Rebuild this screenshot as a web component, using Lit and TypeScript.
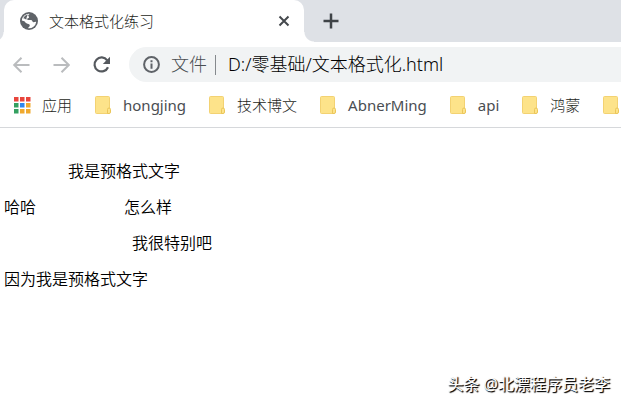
import { LitElement, html, css, svg } from "lit";
import { customElement, property } from "lit/decorators.js";
import { classMap } from "lit/directives/class-map.js";

const BOOKMARKS = ["hongjing", "技术博文", "AbnerMing", "api", "鸿蒙", ""];

const APP_COLORS = [
  "#e8453c", "#e8453c", "#e8453c",
  "#34a060", "#2f86ee", "#f0a92e",
  "#34a060", "#f0a92e", "#f0a92e",
];

const LINES = [
  "\t".repeat(8) + "我是预格式文字",
  "哈哈" + "\t".repeat(11) + "怎么样",
  "\t".repeat(16) + "我很特别吧",
  "因为我是预格式文字",
];

@customElement("tab-strip")
class TabStrip extends LitElement {
  static styles = css`
    :host {
      display: flex;
      height: 42px;
      background: #dee1e6;
      padding-left: 4px;
      overflow: hidden;
    }
    .tab {
      position: relative;
      display: flex;
      align-items: center;
      flex: 0 0 300px;
      box-sizing: border-box;
      padding: 0 12px 0 16px;
      background: #fff;
      border-radius: 10px 10px 0 0;
    }
    .tab::before,
    .tab::after {
      content: "";
      position: absolute;
      bottom: 0;
      width: 10px;
      height: 10px;
    }
    .tab::before {
      right: 100%;
      background: radial-gradient(circle at 0 0, transparent 9px, #fff 10px);
    }
    .tab::after {
      left: 100%;
      background: radial-gradient(circle at 100% 0, transparent 9px, #fff 10px);
    }
    .title {
      flex: 1;
      margin-left: 11px;
      font-size: 15px;
      line-height: 20px;
      font-weight: 300;
      color: #1c1e21;
    }
    button {
      display: flex;
      align-items: center;
      justify-content: center;
      width: 16px;
      padding: 0;
      border: 0;
      background: none;
    }
    .new {
      margin-left: 19px;
    }
    svg {
      display: block;
      flex: none;
    }
  `;

  render() {
    return html`
      <div class="tab">
        <svg width="18" height="18" viewBox="0 0 18 18" aria-hidden="true">
          <circle cx="9" cy="9" r="9" fill="#5f6368" />
          <path d="M9.8 1.9C8.2 2.600 7.800 3.600 8.800 4.500C9.500 5.200 8.900 6.100 8 6.200C6.900 6.400 7 7.700 8 7.900L11.200 8.100C12.700 8.400 12.200 10.300 13.600 10.300C14.700 10.300 15.300 9.700 16.200 9.900A7.300 7.300 0 0 1 8.100 16.200C8.200 15 9.800 14.900 9.800 13.500C9.800 12.200 8.700 11.900 7.500 11.800C5.900 11.600 5.300 10 4.400 9.300L1.800 8.600A7.200 7.200 0 0 1 9.800 1.900Z" fill="#fff" />
          <path d="M3.200 6.200C4.600 6.200 5.200 7.300 6.400 7.600L6.600 5.400L7.800 2.400A7 7 0 0 0 3.200 6.200Z" fill="#5f6368" />
        </svg>
        <span class="title">文本格式化练习</span>
        <button aria-label="关闭">
          <svg width="12" height="12" viewBox="0 0 12 12"><path d="M1.5 1.5L10.5 10.5M10.5 1.5L1.5 10.5" stroke="#45494d" stroke-width="2" /></svg>
        </button>
      </div>
      <button class="new" aria-label="新标签页">
        <svg width="16" height="16" viewBox="0 0 16 16"><path d="M8 0.5V15.5M0.5 8H15.5" stroke="#3f4347" stroke-width="2.500" /></svg>
      </button>
    `;
  }
}

@customElement("nav-bar")
class NavBar extends LitElement {
  static styles = css`
    :host {
      display: flex;
      align-items: center;
      height: 45px;
      padding-left: 12px;
      background: #fff;
    }
    button {
      display: flex;
      align-items: center;
      flex: none;
      padding: 0;
      border: 0;
      background: none;
      font: inherit;
      color: #5f6368;
    }
    .nav {
      width: 40px;
    }
    .omnibox {
      display: flex;
      align-items: center;
      flex: 1;
      min-width: 0;
      height: 35px;
      margin-left: -3px;
      padding-left: 14px;
      background: #f1f3f4;
      border-radius: 18px 0 0 18px;
      font-size: 18px;
      line-height: 24px;
      font-weight: 300;
    }
    .info {
      gap: 11px;
      color: #4a4e52;
    }
    .rule {
      flex: none;
      width: 1px;
      height: 20px;
      margin: 0 12px 0 8px;
      background: #85898d;
    }
    .info span,
    input {
      padding: 0 0 2px;
    }
    input {
      flex: 1;
      min-width: 0;
      border: 0;
      outline: 0;
      background: none;
      font: inherit;
      color: #000;
    }
    svg {
      display: block;
      flex: none;
    }
  `;

  render() {
    return html`
      <button class="nav" aria-label="后退">
        <svg width="18" height="18" viewBox="0 0 18 18"><path d="M17.500 9H2.500M9.500 1.700L2.200 9L9.500 16.300" fill="none" stroke="#babcbe" stroke-width="2" /></svg>
      </button>
      <button class="nav" aria-label="前进">
        <svg width="18" height="18" viewBox="0 0 18 18"><path d="M1.500 9H16.500M9.500 1.700L16.800 9L9.500 16.300" fill="none" stroke="#babcbe" stroke-width="2" /></svg>
      </button>
      <button class="nav" aria-label="重新加载">
        <svg width="20" height="18" viewBox="0 0 20 18">
          <path d="M15.200 4.300A7 7 0 1 0 16 11.200" fill="none" stroke="#55595e" stroke-width="2.200" />
          <path d="M18 0.800V8H10.800Z" fill="#55595e" />
        </svg>
      </button>
      <div class="omnibox">
        <button class="info">
          <svg width="17" height="17" viewBox="0 0 17 17" aria-hidden="true">
            <circle cx="8.500" cy="8.500" r="7.400" fill="none" stroke="#5f6368" stroke-width="2" />
            <path d="M8.500 7.500V12.700M8.500 4.300V6.200" stroke="#5f6368" stroke-width="2" />
          </svg>
          <span>文件</span>
        </button>
        <span class="rule"></span>
        <input aria-label="地址" value="D:/零基础/文本格式化.html" />
      </div>
    `;
  }
}

@customElement("bookmark-bar")
class BookmarkBar extends LitElement {
  @property({ attribute: false }) items: string[] = BOOKMARKS;

  static styles = css`
    :host {
      display: flex;
      align-items: center;
      gap: 23px;
      box-sizing: border-box;
      height: 41px;
      padding: 0 0 4px 14px;
      background: #fff;
      border-bottom: 1px solid #d6d8db;
      overflow: hidden;
      font-size: 15px;
    }
    button {
      display: flex;
      align-items: center;
      flex: none;
      gap: 12px;
      height: 24px;
      padding: 0;
      border: 0;
      background: none;
      font: inherit;
      line-height: 24px;
      color: #4a4e52;
      white-space: nowrap;
    }
    .han {
      font-weight: 300;
      color: #1c1e21;
    }
    svg {
      display: block;
      flex: none;
      overflow: visible;
    }
  `;

  render() {
    return html`
      <button class="han">
        <svg width="16" height="16" viewBox="0 0 16 16" aria-hidden="true">
          ${APP_COLORS.map((c, i) => svg`<rect x=${(i % 3) * 6} y=${Math.floor(i / 3) * 6} width="4.500" height="4.500" fill=${c} />`)}
        </svg>
        应用
      </button>
      ${this.items.map(
        (name) => html`
          <button class=${classMap({ han: /\p{Script=Han}/u.test(name) })} aria-label=${name || "文件夹"}>
            <svg width="16" height="18" viewBox="0 0 16 18" aria-hidden="true">
              <rect x="0.500" y="0.500" width="14" height="17" rx="1" fill="#fde38a" stroke="#f3d272" />
              <path d="M12.500 17.500V13.500Q12.500 12 14 12Q15.500 12 15.500 13.500V16Q15.500 17.500 14 17.500Z" fill="#fde38a" stroke="#ebc659" />
            </svg>
            ${name}
          </button>
        `
      )}
    `;
  }
}

@customElement("app-root")
class AppRoot extends LitElement {
  static styles = css`
    :host {
      display: block;
      position: relative;
      min-height: 100vh;
      background: #fff;
      font-family: "Noto Sans", "Noto Sans CJK SC", sans-serif;
    }
    pre {
      margin: 0;
      padding: 33px 4px;
      font-family: "Noto Sans CJK SC", sans-serif;
      font-size: 16px;
      font-weight: 350;
      line-height: 18px;
      tab-size: 8px;
      color: #000;
    }
    .credit {
      position: absolute;
      right: 11px;
      bottom: 8px;
      font-size: 16px;
      line-height: 24px;
      color: #fff;
      text-shadow: 1px 1px 1px #000, 1px 1px 1px #444;
    }
  `;

  render() {
    return html`
      <tab-strip></tab-strip>
      <nav-bar></nav-bar>
      <bookmark-bar></bookmark-bar>
      <pre>${LINES.join("\n\n")}</pre>
      <div class="credit">头条 @北漂程序员老李</div>
    `;
  }
}
